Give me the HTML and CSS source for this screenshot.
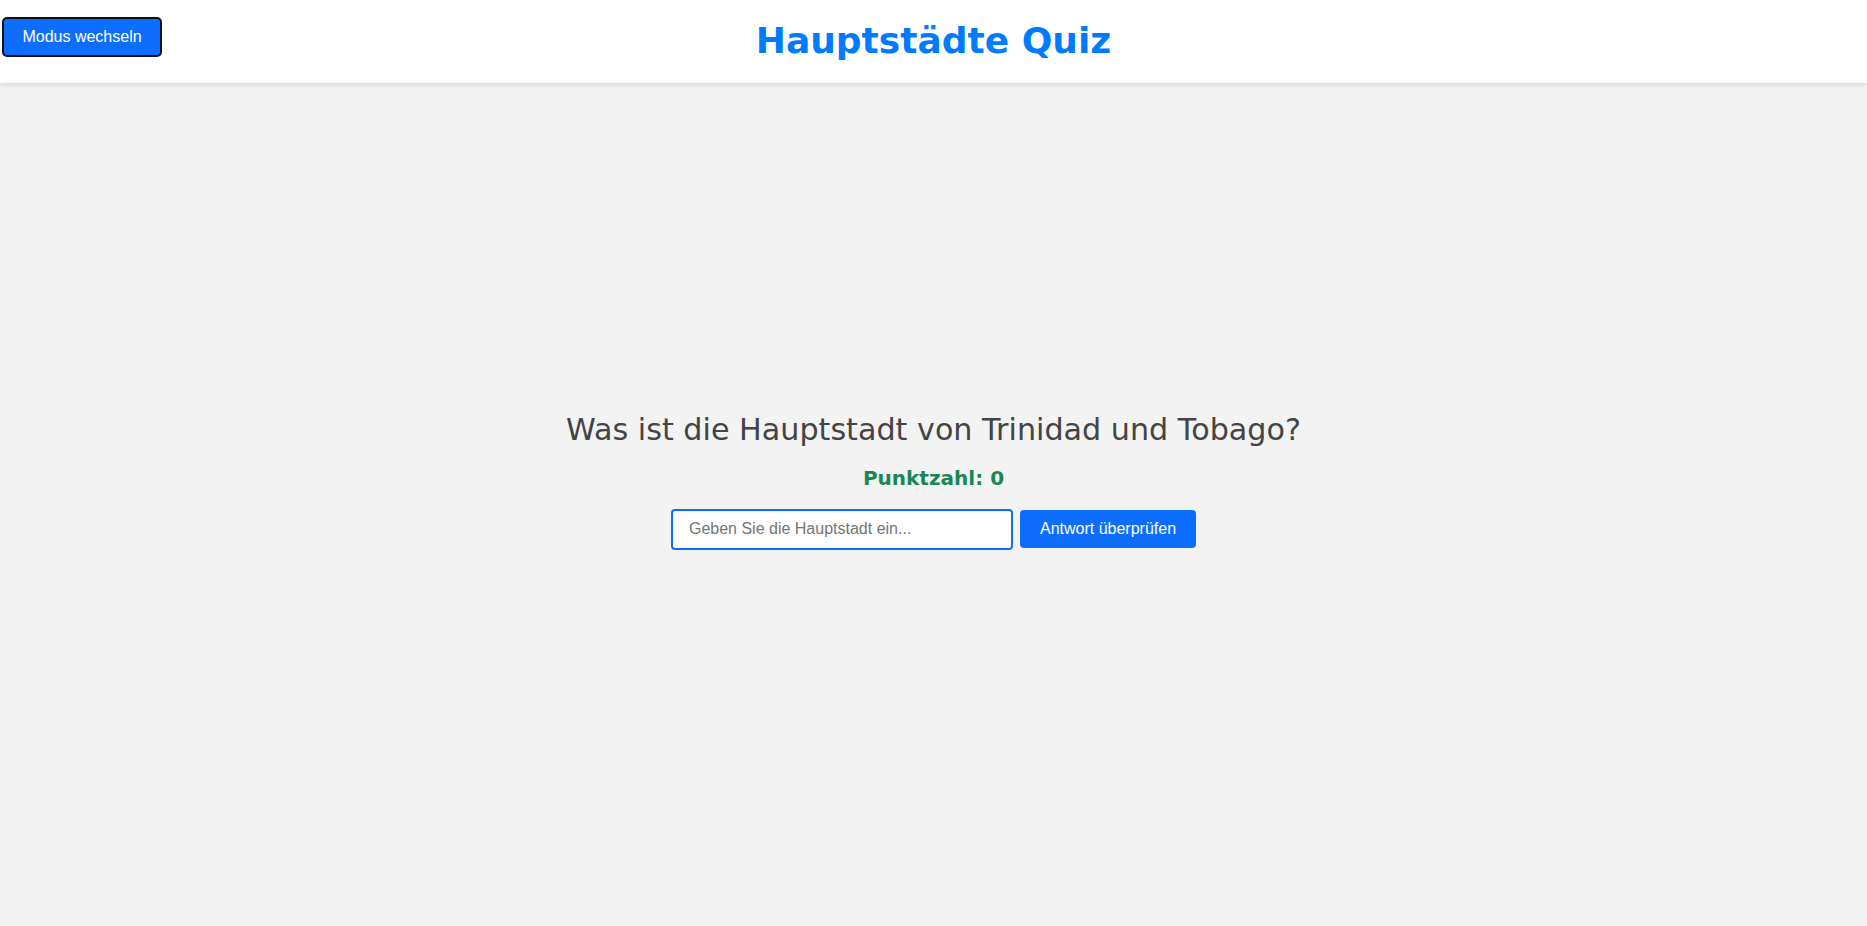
FILE: index.html
```html
<!DOCTYPE html>
<html lang="de">
<head>
<meta charset="utf-8">
<title>Hauptstädte Quiz</title>
<link rel="stylesheet" href="styles.css">
</head>
<body>
<header class="topbar">
  <button class="mode-btn" type="button">Modus wechseln</button>
  <h1 class="title">Hauptstädte Quiz</h1>
</header>
<main class="quiz">
  <h2 class="question">Was ist die Hauptstadt von Trinidad und Tobago?</h2>
  <p class="score">Punktzahl: 0</p>
  <div class="answer-row">
    <input class="answer-input" type="text" placeholder="Geben Sie die Hauptstadt ein...">
    <button class="check-btn" type="button">Antwort überprüfen</button>
  </div>
</main>
</body>
</html>
```

FILE: styles.css
```css
* { box-sizing: border-box; }

html, body {
  margin: 0;
  padding: 0;
}

body {
  font-family: "DejaVu Sans", Verdana, sans-serif;
  background: #f3f3f3;
  min-height: 100vh;
}

.topbar {
  position: relative;
  background: #ffffff;
  padding: 20px 0 21px;
  box-shadow: 0 2px 4px rgba(0, 0, 0, 0.1);
  text-align: center;
}

.title {
  margin: 0;
  font-family: "DejaVu Sans", Verdana, sans-serif;
  font-size: 36px;
  font-weight: bold;
  line-height: 42px;
  color: #007bff;
}

.mode-btn {
  position: absolute;
  left: 2px;
  top: 17px;
  width: 160px;
  height: 40px;
  padding: 0;
  font-family: "Liberation Sans", Arial, sans-serif;
  font-size: 16px;
  color: #ffffff;
  background: #0d6efd;
  border: 2px solid #111111;
  border-radius: 5px;
}

.quiz {
  min-height: calc(100vh - 83px);
  display: flex;
  flex-direction: column;
  align-items: center;
  justify-content: center;
  padding-bottom: 48px;
}

.question {
  margin: 0;
  font-size: 30.2px;
  font-weight: normal;
  line-height: 35px;
  color: #444444;
}

.score {
  margin: 20px 0 0;
  font-size: 20px;
  font-weight: bold;
  line-height: 23px;
  color: #198754;
}

.answer-row {
  margin-top: 19px;
  display: flex;
  align-items: center;
  gap: 7px;
}

.answer-input {
  width: 342px;
  height: 41px;
  padding: 0 16px;
  font-family: "Liberation Sans", Arial, sans-serif;
  font-size: 16px;
  color: #222222;
  background: #ffffff;
  border: 2px solid #0d6efd;
  border-radius: 4px;
  outline: none;
}

.answer-input::placeholder {
  color: #757575;
}

.check-btn {
  height: 38px;
  padding: 0 20px;
  font-family: "Liberation Sans", Arial, sans-serif;
  font-size: 16px;
  color: #ffffff;
  background: #0d6efd;
  border: none;
  border-radius: 4px;
}
```
